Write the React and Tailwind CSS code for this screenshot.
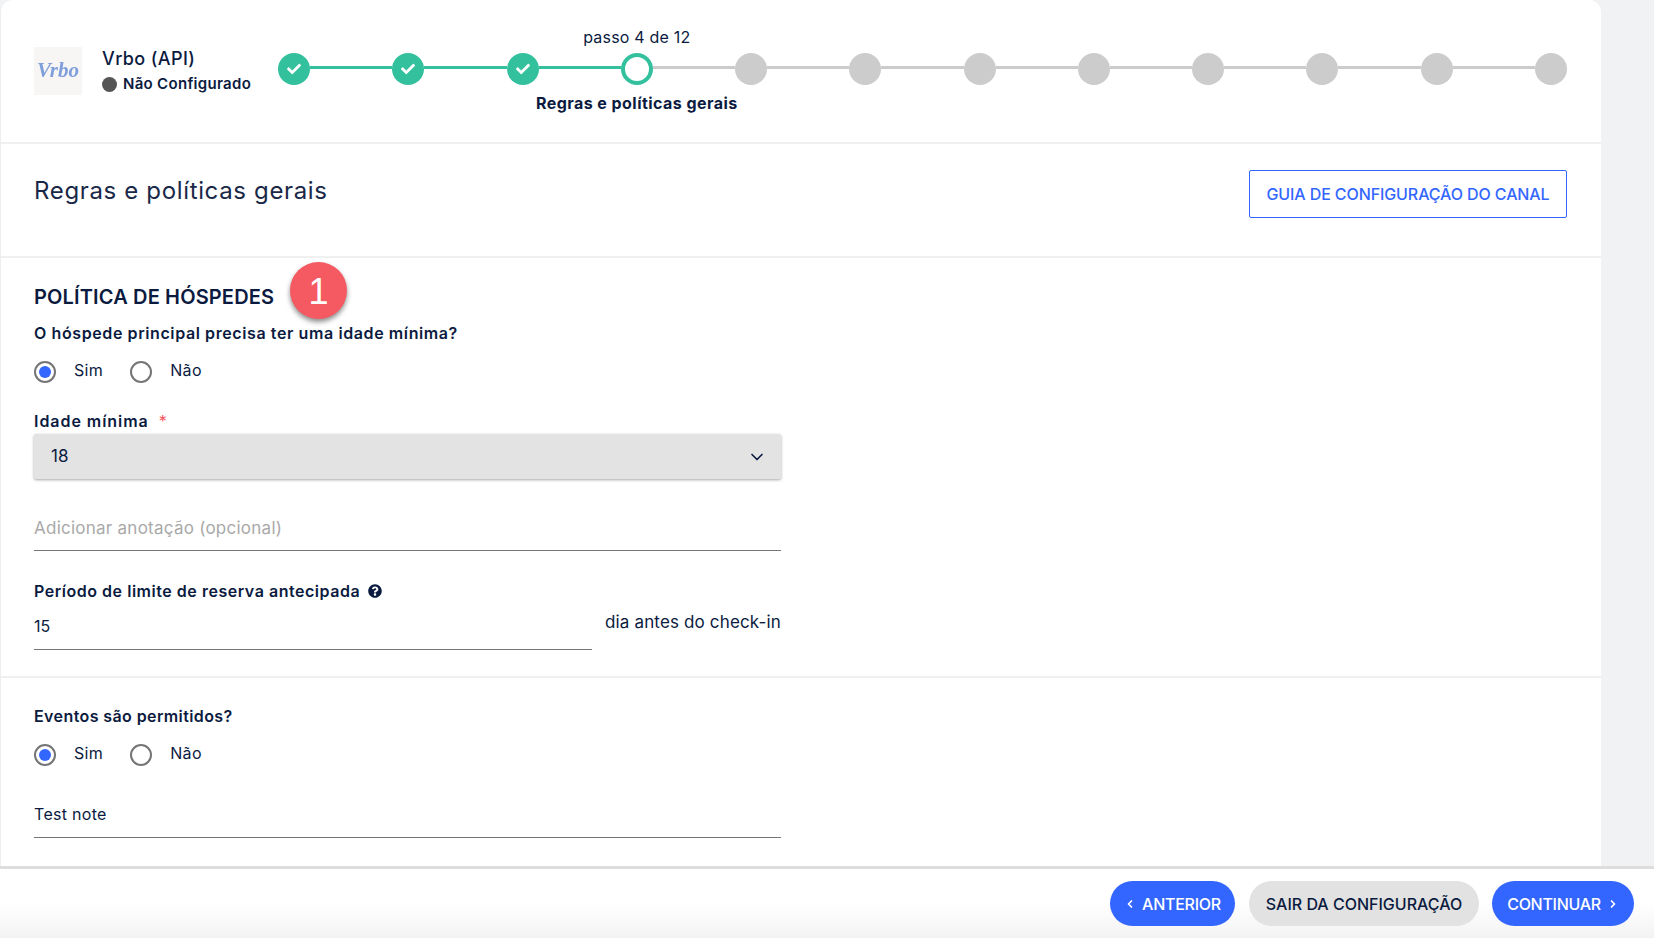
import React from 'react'
import { ChevronDown, ChevronLeft, ChevronRight } from 'lucide-react'
import { FaCheck, FaQuestionCircle } from 'react-icons/fa'

const steps = [1, 2, 3, 4, 5, 6, 7, 8, 9, 10, 11, 12]

function Step({ n }) {
  if (n < 4) {
    return (
      <div className="w-8 h-8 rounded-full bg-[#32c09d] flex items-center justify-center shrink-0 text-white">
        <FaCheck className="w-[14px] h-[14px]" />
      </div>
    )
  }
  if (n === 4) {
    return (
      <div className="relative w-8 h-8 rounded-full border-[4px] border-[#32c09d] bg-white shrink-0">
        <div className="absolute left-1/2 -translate-x-1/2 top-[-32px] whitespace-nowrap text-[16px] leading-6 text-[#0b1b3f] tracking-[0.2px]">passo 4 de 12</div>
        <div className="absolute left-1/2 -translate-x-1/2 top-[34px] whitespace-nowrap text-[16px] leading-6 font-bold text-[#0b1b3f] tracking-[0.45px]">Regras e políticas gerais</div>
      </div>
    )
  }
  return <div className="w-8 h-8 rounded-full bg-[#cccccc] shrink-0" />
}

function Radio({ checked, label }) {
  return (
    <label className="flex items-start">
      <span className="w-[22px] h-[22px] rounded-full border-2 border-[#757575] flex items-center justify-center bg-white">
        {checked && <span className="w-3 h-3 rounded-full bg-[#3366ff]" />}
      </span>
      <span className="ml-[18px] mt-[-1px] text-[16px] leading-5 text-[#0b1b3f] tracking-[0.35px]">{label}</span>
    </label>
  )
}

function RadioRow() {
  return (
    <div className="flex gap-[27px]">
      <Radio checked label="Sim" />
      <Radio label="Não" />
    </div>
  )
}

export default function App() {
  return (
    <div className="relative h-[938px] overflow-hidden bg-[#f1f2f4] font-['Inter',sans-serif] text-[#0b1b3f]">
      <div className="w-[1601px] bg-white rounded-t-xl border-l border-[#eeeeee] h-full">
        {/* cabecera */}
        <div className="h-[144px] border-b-2 border-[#f0f0f0] pl-[33px] pr-[34px] pt-[47px] flex">
          <div className="w-[48px] h-[48px] bg-[#f7f6f5] flex items-center justify-center shrink-0">
            <span className="font-['Liberation_Serif',serif] italic font-bold text-[21px] text-[#7f9fdc] blur-[0.7px]">Vrbo</span>
          </div>
          <div className="ml-[20px] w-[177px] shrink-0">
            <div className="text-[18px] leading-6 font-medium tracking-[0.4px]">Vrbo (API)</div>
            <div className="flex items-center mt-[1px]">
              <span className="w-[15px] h-[15px] rounded-full bg-[#555555] mr-[6px]" />
              <span className="text-[15px] leading-6 font-semibold tracking-[0.3px] whitespace-nowrap">Não Configurado</span>
            </div>
          </div>
          <div className="flex-1 flex items-start mt-[6px] ml-[-1px]">
            {steps.map(n => (
              <React.Fragment key={n}>
                <Step n={n} />
                {n < 12 && <div className={`flex-1 h-[3px] mt-[13px] ${n < 4 ? 'bg-[#32c09d]' : 'bg-[#cccccc]'}`} />}
              </React.Fragment>
            ))}
          </div>
        </div>

        {/* titulo */}
        <div className="h-[114px] border-b-2 border-[#f0f0f0] pl-[33px] pr-[34px] pt-[26px] flex justify-between items-start">
          <h1 className="text-[24px] leading-8 mt-[5px] tracking-[0.65px] text-[#1a2848]">Regras e políticas gerais</h1>
          <button className="w-[318px] h-[48px] border border-[#3366ff] rounded-[2px] text-[#3366ff] text-[16px] font-medium tracking-[-0.1px] whitespace-nowrap">GUIA DE CONFIGURAÇÃO DO CANAL</button>
        </div>

        {/* huespedes */}
        <div className="h-[396px] border-b-2 border-[#f0f0f0] pl-[33px] w-full">
          <div className="w-[747px]">
            <div className="mt-[24px] h-[30px]">
              <h2 className="text-[20px] leading-[30px] font-semibold tracking-[0.15px]">POLÍTICA DE HÓSPEDES</h2>
            </div>
            <div className="mt-[9px] text-[16px] leading-6 font-semibold tracking-[0.6px]">O hóspede principal precisa ter uma idade mínima?</div>
            <div className="mt-[16px]"><RadioRow /></div>
            <div className="mt-[26px] text-[16px] leading-6 font-semibold tracking-[0.95px] flex">
              Idade mínima <span className="ml-[10px] text-[#f5555f] font-normal">*</span>
            </div>
            <div className="h-[45px] mt-[1px] bg-[#e3e3e3] rounded-[2px] shadow-[0_1px_3px_rgba(0,0,0,0.35)] flex items-center justify-between pl-[17px] pr-[14px] text-[17px]">
              <span>18</span>
              <ChevronDown className="w-[20px] h-[20px]" strokeWidth={2} />
            </div>
            <div className="mt-[37px] h-[35px] border-b border-[#767676] text-[17px] leading-6 text-[#a9a9a9] tracking-[0.25px]">Adicionar anotação (opcional)</div>
            <div className="mt-[28px] text-[16px] leading-6 font-semibold tracking-[0.53px] flex items-center">
              Período de limite de reserva antecipada
              <FaQuestionCircle className="w-[14px] h-[14px] ml-[8px]" />
            </div>
            <div className="flex justify-between mt-[8px]">
              <div className="w-[558px] h-[39px] border-b border-[#767676] pt-[3px] text-[16px] leading-6">15</div>
              <div className="text-[17px] leading-6 mt-[-1px] tracking-[0.15px] whitespace-nowrap">dia antes do check-in</div>
            </div>
          </div>
        </div>

        {/* eventos */}
        <div className="pl-[33px] w-[780px]">
          <div className="mt-[26px] text-[16px] leading-6 font-semibold tracking-[0.4px]">Eventos são permitidos?</div>
          <div className="mt-[16px]"><RadioRow /></div>
          <div className="mt-[34px] h-[38px] border-b border-[#767676] text-[16px] leading-6 tracking-[0.3px] pt-[2px]">Test note</div>
        </div>
      </div>

      {/* badge de anotacion */}
      <div className="absolute left-[290px] top-[262px] w-[57px] h-[57px] rounded-full bg-[#f55a63] shadow-[0_3px_5px_rgba(0,0,0,0.45)] flex items-center justify-center pt-[3px] text-white text-[36px] font-['Liberation_Sans',sans-serif]">1</div>

      {/* pie */}
      <div className="absolute left-0 right-0 bottom-0 h-[72px] border-t-[3px] border-[#dddddd] bg-gradient-to-b from-white from-50% to-[#f3f3f3] flex justify-end items-start pt-[12px] pr-[20px] gap-[13px] text-[16px] font-medium">
        <button className="w-[125px] h-[45px] mr-px rounded-full bg-[#3366ff] text-white flex items-center justify-center gap-[6px] tracking-[-0.25px]">
          <ChevronLeft className="w-3 h-3" strokeWidth={3.5} /> ANTERIOR
        </button>
        <button className="w-[230px] h-[45px] rounded-full bg-[#e2e2e2] whitespace-nowrap">SAIR DA CONFIGURAÇÃO</button>
        <button className="w-[142px] h-[45px] rounded-full bg-[#3366ff] text-white flex items-center justify-center gap-[6px] tracking-[-0.3px]">
          CONTINUAR <ChevronRight className="w-3 h-3" strokeWidth={3.5} />
        </button>
      </div>
    </div>
  )
}
